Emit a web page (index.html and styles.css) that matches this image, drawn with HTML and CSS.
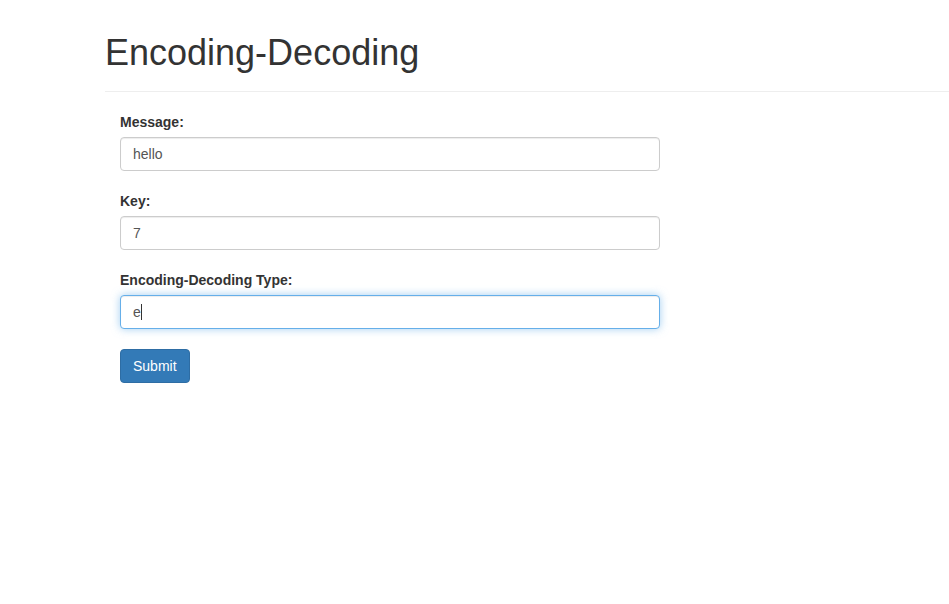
FILE: index.html
```html
<!DOCTYPE html>
<html lang="en">
<head>
<meta charset="utf-8">
<meta name="viewport" content="width=device-width, initial-scale=1">
<title>Encoding-Decoding</title>
<link rel="stylesheet" href="styles.css">
</head>
<body>
<main class="container">
  <header class="page-header">
    <h1>Encoding-Decoding</h1>
  </header>
  <form class="cipher-form">
    <div class="form-group">
      <label for="message">Message:</label>
      <input class="form-control" id="message" type="text" value="hello">
    </div>
    <div class="form-group">
      <label for="key">Key:</label>
      <input class="form-control" id="key" type="text" value="7">
    </div>
    <div class="form-group">
      <label for="type">Encoding-Decoding Type:</label>
      <div class="field">
        <input class="form-control is-active" id="type" type="text" value="e">
        <span class="caret"></span>
      </div>
    </div>
    <button class="btn" type="submit">Submit</button>
  </form>
</main>
</body>
</html>
```
FILE: styles.css
```css
* {
  box-sizing: border-box;
}

body {
  margin: 0;
  background: #fff;
  color: #333;
  font-family: "Helvetica Neue", Helvetica, Arial, "Liberation Sans", sans-serif;
  font-size: 14px;
  line-height: 20px;
}

.container {
  margin-left: 105px;
}

.page-header {
  margin: 0 0 20px;
  padding: 33px 0 19px;
  border-bottom: 1px solid #eee;
}

h1 {
  margin: 0;
  font-size: 36px;
  font-weight: 500;
  line-height: 39px;
}

.cipher-form {
  max-width: 570px;
  padding: 0 15px;
}

.form-group {
  margin-bottom: 20px;
}

label {
  display: block;
  margin-bottom: 5px;
  font-weight: 700;
}

.field {
  position: relative;
}

.form-control {
  display: block;
  width: 100%;
  height: 34px;
  padding: 6px 12px;
  border: 1px solid #ccc;
  border-radius: 4px;
  background: #fff;
  box-shadow: inset 0 1px 1px rgba(0, 0, 0, .075);
  color: #555;
  font: inherit;
}

.form-control.is-active,
.form-control:focus {
  border-color: #66afe9;
  outline: 0;
  box-shadow: inset 0 1px 1px rgba(0, 0, 0, .075), 0 0 8px rgba(102, 175, 233, .6);
}

.caret {
  position: absolute;
  top: 9px;
  left: 21px;
  width: 1px;
  height: 16px;
  background: #333;
}

.field:focus-within .caret {
  display: none;
}

.btn {
  padding: 6px 12px;
  border: 1px solid #2e6da4;
  border-radius: 4px;
  background: #337ab7;
  color: #fff;
  font: inherit;
  cursor: pointer;
}
```
